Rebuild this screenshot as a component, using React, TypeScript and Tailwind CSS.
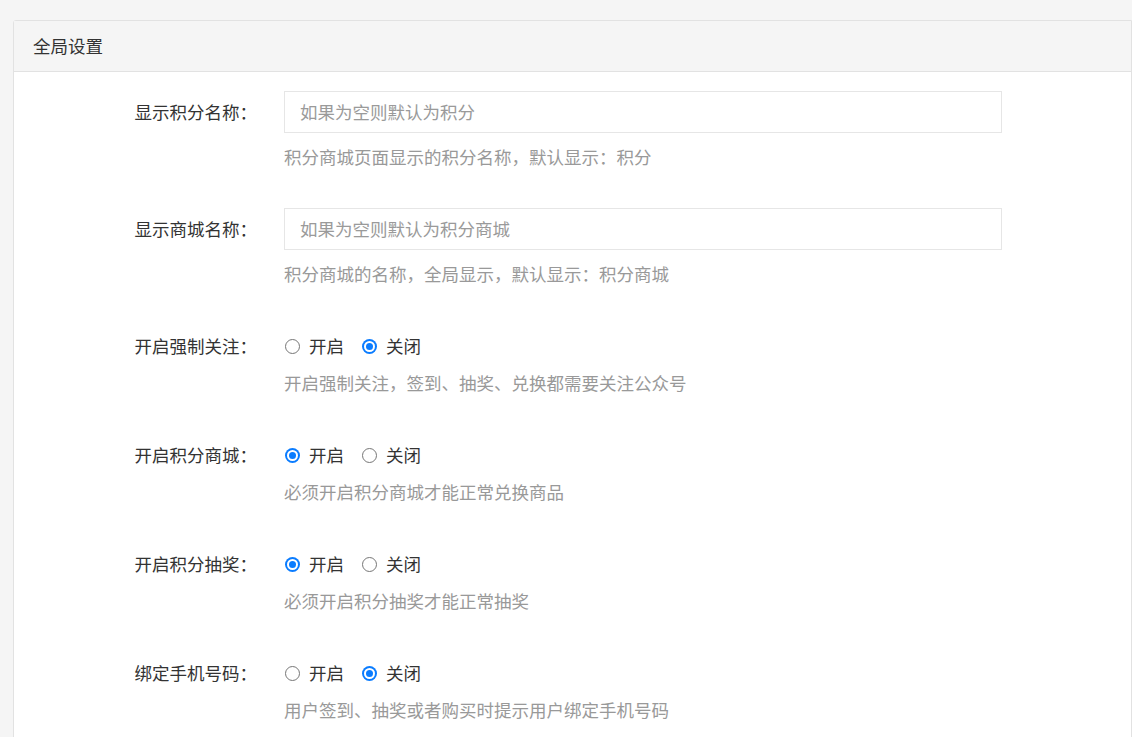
import React from "react";

const Radio = ({ on, label }: { on: boolean; label: string }) => (
  <span className="flex items-center mr-[18px]">
    {on ? (
      <span className="w-[15px] h-[15px] rounded-full bg-[#0a7cff] flex items-center justify-center">
        <span className="w-[11px] h-[11px] rounded-full bg-white flex items-center justify-center">
          <span className="w-[7px] h-[7px] rounded-full bg-[#0a7cff]" />
        </span>
      </span>
    ) : (
      <span className="w-[15px] h-[15px] rounded-full border border-[#767676] bg-white" />
    )}
    <span className="ml-[9px] text-[#333]">{label}</span>
  </span>
);

const Label = ({ t }: { t: string }) => (
  <div className="w-[243px] shrink-0 text-right h-[42px] flex items-center justify-end text-[#333] whitespace-nowrap">{t}：</div>
);

const InputRow = ({ label, ph, help }: { label: string; ph: string; help: string }) => (
  <div className="flex mb-10">
    <Label t={label} />
    <div className="ml-[27px]">
      <div className="w-[718px] h-[42px] border border-[#e6e6e6] flex items-center px-[15px] text-[#9a9a9a]">{ph}</div>
      <div className="mt-[13px] leading-[22px] text-[#999]">{help}</div>
    </div>
  </div>
);

const RadioRow = ({ label, on, help }: { label: string; on: boolean; help: string }) => (
  <div className="flex mb-10">
    <Label t={label} />
    <div className="ml-[27px]">
      <div className="h-[42px] flex items-center pl-[1px]">
        <Radio on={on} label="开启" />
        <Radio on={!on} label="关闭" />
      </div>
      <div className="mt-[5px] leading-[22px] text-[#999]">{help}</div>
    </div>
  </div>
);

export default function App() {
  return (
    <div className="w-[1132px] h-[737px] overflow-hidden bg-[#f5f5f5] pt-[20px] pl-[13px] text-[17.5px]" style={{ fontFamily: '"Noto Sans CJK SC", "Microsoft YaHei", sans-serif' }}>
      <div className="border border-[#e2e2e2] rounded-tl-[3px] bg-white h-[800px]">
        <div className="h-[51px] bg-[#f5f5f5] border-b border-[#e2e2e2] flex items-center pl-[19px] text-[#333]">全局设置</div>
        <div className="pt-[19px]">
          <InputRow label="显示积分名称" ph="如果为空则默认为积分" help="积分商城页面显示的积分名称，默认显示：积分" />
          <InputRow label="显示商城名称" ph="如果为空则默认为积分商城" help="积分商城的名称，全局显示，默认显示：积分商城" />
          <RadioRow label="开启强制关注" on={false} help="开启强制关注，签到、抽奖、兑换都需要关注公众号" />
          <RadioRow label="开启积分商城" on={true} help="必须开启积分商城才能正常兑换商品" />
          <RadioRow label="开启积分抽奖" on={true} help="必须开启积分抽奖才能正常抽奖" />
          <RadioRow label="绑定手机号码" on={false} help="用户签到、抽奖或者购买时提示用户绑定手机号码" />
        </div>
      </div>
    </div>
  );
}
